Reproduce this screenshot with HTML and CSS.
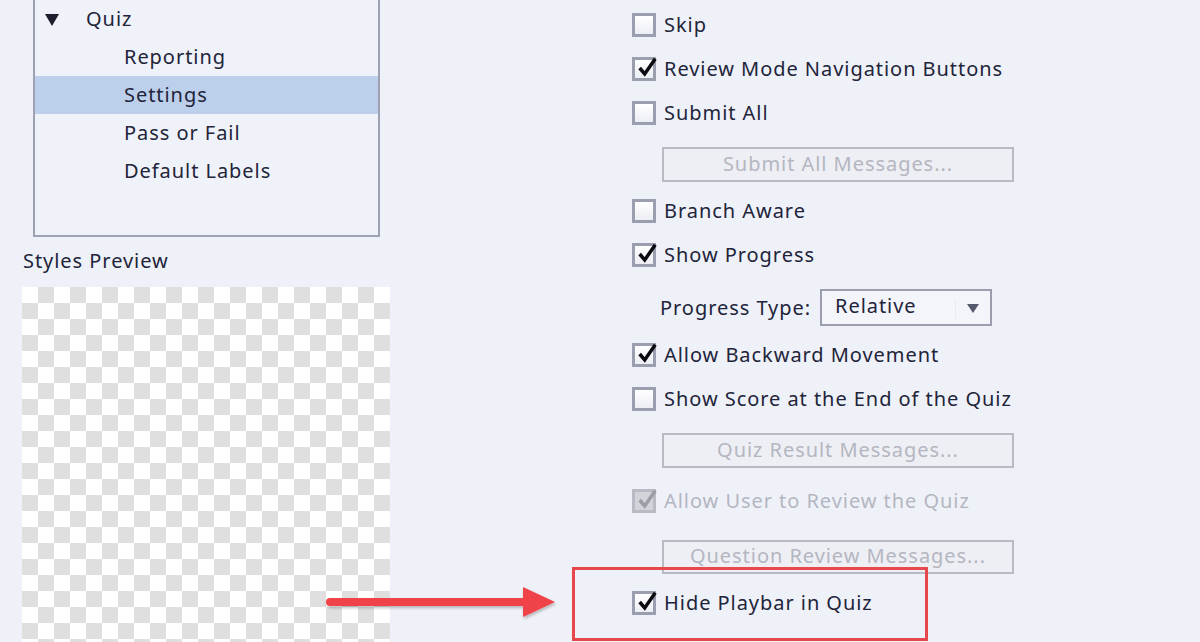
FILE: index.html
```html
<!DOCTYPE html>
<html>
<head>
<meta charset="utf-8">
<link rel="stylesheet" href="styles.css">
</head>
<body>
<div class="page">
  <div class="left">
    <div class="tree">
      <div class="tree-row parent"><span class="caret"></span><span>Quiz</span></div>
      <div class="tree-row child">Reporting</div>
      <div class="tree-row child selected">Settings</div>
      <div class="tree-row child">Pass or Fail</div>
      <div class="tree-row child">Default Labels</div>
    </div>
    <div class="styles-label">Styles Preview</div>
    <div class="preview"></div>
  </div>
  <div class="right">
    <div class="row r-first"><span class="cb"></span><span>Skip</span></div>
    <div class="row"><span class="cb checked"><svg viewBox="0 0 24 24"><path d="M4 12 L9.5 18.5 L21 2" /></svg></span><span>Review Mode Navigation Buttons</span></div>
    <div class="row"><span class="cb"></span><span>Submit All</span></div>
    <div class="btn b1">Submit All Messages...</div>
    <div class="row after-btn"><span class="cb"></span><span>Branch Aware</span></div>
    <div class="row"><span class="cb checked"><svg viewBox="0 0 24 24"><path d="M4 12 L9.5 18.5 L21 2" /></svg></span><span>Show Progress</span></div>
    <div class="dd-row">
      <span class="dd-label">Progress Type:</span>
      <div class="dropdown"><span>Relative</span><span class="dd-sep"></span><span class="dd-arrow"></span></div>
    </div>
    <div class="row after-dd"><span class="cb checked"><svg viewBox="0 0 24 24"><path d="M4 12 L9.5 18.5 L21 2" /></svg></span><span>Allow Backward Movement</span></div>
    <div class="row"><span class="cb"></span><span>Show Score at the End of the Quiz</span></div>
    <div class="btn b2">Quiz Result Messages...</div>
    <div class="row disabled after-btn2"><span class="cb checked dis"><svg viewBox="0 0 24 24"><path d="M4 12 L9.5 18.5 L21 2" /></svg></span><span>Allow User to Review the Quiz</span></div>
    <div class="btn b3">Question Review Messages...</div>
    <div class="row after-btn3"><span class="cb checked"><svg viewBox="0 0 24 24"><path d="M4 12 L9.5 18.5 L21 2" /></svg></span><span>Hide Playbar in Quiz</span></div>
  </div>
</div>
<div class="highlight-box"></div>
<svg class="arrow" width="240" height="40" viewBox="0 0 240 40">
  <defs>
    <filter id="sh" x="-10%" y="-50%" width="120%" height="200%">
      <feDropShadow dx="1" dy="2" stdDeviation="1.5" flood-color="#000" flood-opacity="0.25"/>
    </filter>
  </defs>
  <g filter="url(#sh)" fill="#f0434a" stroke="none">
    <rect x="4" y="16" width="204" height="8" rx="4"/>
    <polygon points="201,5 233,20 201,35"/>
  </g>
</svg>
</body>
</html>
```
FILE: styles.css
```css
html, body {
  margin: 0;
  padding: 0;
  width: 1200px;
  height: 642px;
  overflow: hidden;
  background: #eff1f8;
  font-family: "Noto Sans", "Open Sans", sans-serif;
  font-size: 20px;
  letter-spacing: 0.95px;
  color: #22243a;
  position: relative;
}

.page {
  display: flex;
  padding-left: 22px;
  height: 642px;
  overflow: hidden;
}

.left {
  width: 368px;
  display: flex;
  flex-direction: column;
}

.tree {
  margin-top: -10px;
  margin-left: 11px;
  height: 247px;
  width: 347px;
  border: 2px solid #9ea1b3;
  padding-top: 8px;
  box-sizing: border-box;
  background: #f0f2f9;
  flex: none;
}

.tree-row {
  height: 38px;
  display: flex;
  align-items: center;
  line-height: 1;
}

.tree-row.parent {
  padding-left: 10px;
}

.caret {
  width: 0;
  height: 0;
  border-left: 7px solid transparent;
  border-right: 7px solid transparent;
  border-top: 12px solid #1d1f2e;
  margin-right: 27px;
  margin-top: 2px;
}

.tree-row.child {
  padding-left: 89px;
}

.tree-row.selected {
  background: #bccfeb;
}

.styles-label {
  margin-top: 11px;
  margin-left: 1px;
  height: 26px;
  line-height: 26px;
  flex: none;
}

.preview {
  margin-top: 13px;
  width: 368px;
  height: 400px;
  flex: none;
  background: repeating-conic-gradient(#dfdfdf 0 25%, #ffffff 0 50%) 0 0 / 32px 32px;
}

.right {
  margin-left: 242px;
  display: flex;
  flex-direction: column;
  width: 420px;
}

.row {
  height: 44px;
  box-sizing: border-box;
  padding-bottom: 1px;
  display: flex;
  align-items: center;
  white-space: nowrap;
  flex: none;
}

.r-first { margin-top: 3px; }

.cb {
  width: 24px;
  height: 24px;
  box-sizing: border-box;
  border: 3px solid #9b9eaf;
  background: linear-gradient(#ffffff, #eceef4);
  margin-right: 8px;
  margin-top: 1px;
  position: relative;
  flex: none;
}

.cb svg {
  position: absolute;
  left: 1px;
  top: -3px;
  width: 22px;
  height: 22px;
  overflow: visible;
}

.cb svg path {
  fill: none;
  stroke: #0a0a10;
  stroke-width: 3.8;
  stroke-linejoin: miter;
  stroke-linecap: butt;
}

.cb.dis {
  border-color: #b9bbc4;
  background: #d3d4da;
}

.cb.dis svg path {
  stroke: #9c9ea6;
}

.row.disabled {
  color: #b4b6c1;
}

.btn {
  margin-left: 30px;
  width: 352px;
  height: 35px;
  box-sizing: border-box;
  border: 2px solid #b9bbc4;
  background: #eeeff4;
  color: #b4b6c1;
  display: flex;
  align-items: center;
  justify-content: center;
  white-space: nowrap;
  padding-bottom: 3px;
  flex: none;
}

.b1 { margin-top: 12px; }
.after-btn { margin-top: 7px; }

.dd-row {
  margin-top: 12px;
  margin-left: 28px;
  height: 37px;
  display: flex;
  align-items: center;
  flex: none;
}

.dd-label {
  margin-right: 9px;
}

.dropdown {
  width: 172px;
  height: 37px;
  box-sizing: border-box;
  border: 2px solid #9b9eaf;
  background: #f4f5fa;
  display: flex;
  align-items: center;
  padding-left: 13px;
  padding-bottom: 5px;
  position: relative;
  flex: none;
}

.dd-sep {
  position: absolute;
  right: 34px;
  top: 8px;
  width: 1px;
  height: 20px;
  background: #e8eaf0;
}

.dd-arrow {
  position: absolute;
  right: 11px;
  top: 13px;
  width: 0;
  height: 0;
  border-left: 6px solid transparent;
  border-right: 6px solid transparent;
  border-top: 9px solid #555a6c;
}

.after-dd { margin-top: 7px; }
.b2 { margin-top: 12px; }
.after-btn2 { margin-top: 11px; }
.b3 { margin-top: 17px; height: 34px; }
.after-btn3 { margin-top: 7px; }

.highlight-box {
  position: absolute;
  left: 572px;
  top: 567px;
  width: 356px;
  height: 74px;
  box-sizing: border-box;
  border: 3px solid #e8474c;
}

.arrow {
  position: absolute;
  left: 322px;
  top: 582px;
}
```
